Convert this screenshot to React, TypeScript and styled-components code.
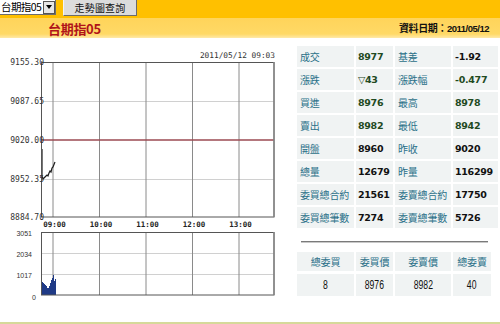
import React from "react";
import styled, { createGlobalStyle } from "styled-components";

const Global = createGlobalStyle`
  html, body { margin: 0; padding: 0; background: #fff; }
  body {
    width: 500px; height: 324px; overflow: hidden;
    font-family: "Noto Sans CJK TC", "Noto Sans", sans-serif;
  }
`;

const Page = styled.div`
  width: 500px;
  height: 324px;
  display: flex;
  flex-direction: column;
`;

const TopBar = styled.div`
  height: 18px;
  flex: none;
  background: #ffc000;
  display: flex;
  align-items: flex-start;
  gap: 7px;
`;

const SelectBox = styled.div`
  width: 56px;
  height: 15px;
  box-sizing: border-box;
  background: #fff;
  border: 1px solid #6d6d6d;
  border-top: none;
  border-left: none;
  display: flex;
  align-items: center;
  justify-content: space-between;
  font-size: 10.5px;
  color: #000;
  line-height: 1;
  letter-spacing: -0.6px;
`;

const SelectText = styled.span`
  padding-left: 1px;
`;

const SelectArrow = styled.span`
  width: 12px;
  height: 13px;
  box-sizing: border-box;
  background: #e6e6e6;
  border: 1px solid #555;
  display: flex;
  align-items: center;
  justify-content: center;
  &::after {
    content: "";
    border-left: 3px solid transparent;
    border-right: 3px solid transparent;
    border-top: 4px solid #000;
  }
`;

const QueryButton = styled.div`
  width: 74px;
  height: 16px;
  box-sizing: border-box;
  background: #dcdcdc;
  border-right: 1px solid #6b6b6b;
  border-bottom: 1px solid #6b6b6b;
  border-left: 1px solid #f4f4f4;
  display: flex;
  align-items: center;
  justify-content: center;
  font-size: 10px;
  color: #111;
  letter-spacing: 0.2px;
`;

const TitleBand = styled.div`
  height: 20px;
  flex: none;
  background: linear-gradient(#ffd45a 0%, #ffd966 80%, #ffe9a8 100%);
  display: flex;
  align-items: center;
  justify-content: space-between;
  padding: 0 11px 0 48px;
`;

const Title = styled.div`
  color: #b0141a;
  font-weight: bold;
  font-size: 13px;
  letter-spacing: -0.3px;
  line-height: 1;
`;

const DateInfo = styled.div`
  color: #111;
  font-weight: bold;
  font-size: 10px;
  line-height: 1;
  letter-spacing: -0.4px;
`;

const DateNum = styled.span`
  font-family: "Liberation Sans", Arial, sans-serif;
  font-size: 9.5px;
  letter-spacing: -0.5px;
`;

const Content = styled.div`
  height: 284px;
  flex: none;
  margin-top: 2px;
  display: flex;
  border-bottom: 2px solid #d6d99a;
  box-sizing: border-box;
`;

const ChartSvg = styled.svg`
  width: 297px;
  height: 280px;
  flex: none;
  display: block;
`;

const Panel = styled.div`
  display: flex;
  flex-direction: column;
  padding-top: 6px;
`;

const Grid = styled.div<{ $cols: string; $rows: string }>`
  display: grid;
  grid-template-columns: ${(p) => p.$cols};
  grid-auto-rows: ${(p) => p.$rows};
  column-gap: 2px;
  row-gap: 2px;
`;

const LabelCell = styled.div<{ $center?: boolean }>`
  background: #f0f3f3;
  color: #2a7088;
  font-size: 10px;
  display: flex;
  align-items: center;
  justify-content: ${(p) => (p.$center ? "center" : "flex-start")};
  padding-left: ${(p) => (p.$center ? "0" : "3px")};
  white-space: nowrap;
  letter-spacing: -0.2px;
`;

const ValueCell = styled.div<{ $tone: "green" | "black" }>`
  background: #f0f3f3;
  color: ${(p) => (p.$tone === "green" ? "#1f4a1f" : "#111")};
  font-family: "DejaVu Sans", Verdana, sans-serif;
  font-weight: bold;
  font-size: 9.5px;
  display: flex;
  align-items: center;
  padding-left: 2px;
  white-space: nowrap;
  letter-spacing: -0.3px;
`;

const DataCell = styled.div`
  background: #f0f3f3;
  color: #111;
  display: flex;
  align-items: center;
  justify-content: center;
`;

const NarrowNum = styled.span`
  display: inline-block;
  font-family: "Liberation Sans", Arial, sans-serif;
  font-size: 12px;
  transform: scaleX(0.72);
`;

const Divider = styled.div`
  margin: 13px 0 10px 4px;
  width: 187px;
  height: 1px;
  background: #7a7a7a;
  box-shadow: 0 1px 0 #c8c8c8;
`;

type Row = [string, string, "green" | "black", string, string, "green" | "black"];

const rows: Row[] = [
  ["成交", "8977", "green", "基差", "-1.92", "black"],
  ["漲跌", "▽43", "green", "漲跌幅", "-0.477", "green"],
  ["買進", "8976", "green", "最高", "8978", "green"],
  ["賣出", "8982", "green", "最低", "8942", "green"],
  ["開盤", "8960", "black", "昨收", "9020", "black"],
  ["總量", "12679", "black", "昨量", "116299", "black"],
  ["委買總合約", "21561", "black", "委賣總合約", "17750", "black"],
  ["委買總筆數", "7274", "black", "委賣總筆數", "5726", "black"],
];

const bidHead = ["總委買", "委買價", "委賣價", "總委賣"];
const bidData = ["8", "8976", "8982", "40"];

const gridX = [53, 99.5, 146, 192.5, 239];
const timeLabels = ["09:00", "10:00", "11:00", "12:00", "13:00"];
const priceLabels: [string, number][] = [
  ["9155.30", 62],
  ["9087.65", 101],
  ["9020.00", 140],
  ["8952.35", 179],
  ["8884.70", 217],
];
const volLabels: [string, number, number][] = [
  ["3051", 233, 32],
  ["2034", 254, 32],
  ["1017", 275, 32],
  ["0", 297, 36],
];
const volBars = [13, 12, 11, 10, 9, 7, 7, 9, 12, 15, 17, 20, 14, 16];
const pricePts = "42,149 42,176 43,179 44,178 45,177 46,176 47,175 48,176 49,173 50,171 51,172 52,168 53,167 55,162";

function Chart() {
  return (
    <ChartSvg viewBox="0 40 297 280">
      <g fontFamily="'DejaVu Sans Mono', monospace">
        <text x={275} y={58} fontSize={7.8} fill="#333" textAnchor="end">
          2011/05/12 09:03
        </text>
        <line x1={41} x2={274} y1={101.5} y2={101.5} stroke="#d0d0d0" />
        <line x1={41} x2={274} y1={179.5} y2={179.5} stroke="#d0d0d0" />
        {gridX.map((x) => (
          <line key={x} x1={x} x2={x} y1={62} y2={217} stroke="#8a8a8a" />
        ))}
        <line x1={41} x2={274} y1={140} y2={140} stroke="#9b4a52" strokeWidth={1.5} />
        <polyline points={pricePts} fill="none" stroke="#1c1c1c" strokeWidth={1.2} />
        <rect x={41.5} y={62.5} width={232.5} height={154.5} fill="none" stroke="#555" />
        <line x1={274} x2={274} y1={62} y2={217} stroke="#888" strokeWidth={1.5} />
        {priceLabels.map(([t, y]) => (
          <text key={t} x={44} y={y + 3} fontSize={8} fill="#333" textAnchor="end">
            {t}
          </text>
        ))}
        {timeLabels.map((t, i) => (
          <text key={t} x={gridX[i] + 1.5} y={227} fontSize={7.5} fontWeight="bold" fill="#222" textAnchor="middle">
            {t}
          </text>
        ))}
        <line x1={41} x2={274} y1={253.5} y2={253.5} stroke="#d0d0d0" />
        <line x1={41} x2={274} y1={274.5} y2={274.5} stroke="#d0d0d0" />
        {gridX.map((x) => (
          <line key={"v" + x} x1={x} x2={x} y1={232} y2={295} stroke="#8a8a8a" />
        ))}
        {volBars.map((h, i) => (
          <rect key={i} x={42 + i} y={295 - h} width={1} height={h} fill="#1f3a86" />
        ))}
        <rect x={41.5} y={232.5} width={232.5} height={62.5} fill="none" stroke="#555" />
        <line x1={274} x2={274} y1={232} y2={295} stroke="#888" strokeWidth={1.5} />
      </g>
      <g fontFamily="'Liberation Sans', Arial, sans-serif">
        {volLabels.map(([t, y, x]) => (
          <text key={t} x={x} y={y + 2.5} fontSize={7} fill="#333" textAnchor="end">
            {t}
          </text>
        ))}
      </g>
    </ChartSvg>
  );
}

export default function App() {
  return (
    <Page>
      <Global />
      <TopBar>
        <SelectBox>
          <SelectText>台期指05</SelectText>
          <SelectArrow />
        </SelectBox>
        <QueryButton>走勢圖查詢</QueryButton>
      </TopBar>
      <TitleBand>
        <Title>台期指05</Title>
        <DateInfo>
          資料日期：<DateNum>2011/05/12</DateNum>
        </DateInfo>
      </TitleBand>
      <Content>
        <Chart />
        <Panel>
          <Grid $cols="57px 37px 56px 45px" $rows="21px">
            {rows.map((r) => (
              <React.Fragment key={r[0]}>
                <LabelCell>{r[0]}</LabelCell>
                <ValueCell $tone={r[2]}>{r[1]}</ValueCell>
                <LabelCell>{r[3]}</LabelCell>
                <ValueCell $tone={r[5]}>{r[4]}</ValueCell>
              </React.Fragment>
            ))}
          </Grid>
          <Divider />
          <Grid $cols="57px 37px 56px 38px" $rows="auto">
            {bidHead.map((h) => (
              <LabelCell key={h} $center style={{ height: 19 }}>
                {h}
              </LabelCell>
            ))}
            {bidData.map((d, i) => (
              <DataCell key={i} style={{ height: 22, marginTop: 1 }}>
                <NarrowNum>{d}</NarrowNum>
              </DataCell>
            ))}
          </Grid>
        </Panel>
      </Content>
    </Page>
  );
}
